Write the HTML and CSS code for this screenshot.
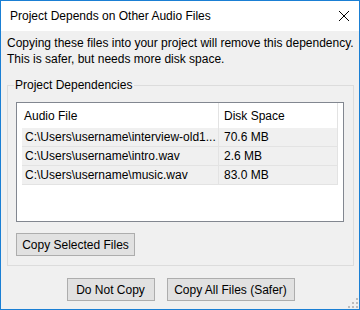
FILE: index.html
```html
<!DOCTYPE html>
<html lang="en">
<head>
    <meta charset="UTF-8">
    <meta name="viewport" content="width=device-width, initial-scale=1.0">
    <title>Project Depends on Other Audio Files</title>
    <link rel="stylesheet" href="styles.css">
</head>
<body>
    <div class="window">
        <div class="titlebar">
            <span class="title">Project Depends on Other Audio Files</span>
            <svg class="close" width="10" height="10" viewBox="0 0 10 10">
                <path d="M0 0L10 10M10 0L0 10" stroke="#000" stroke-width="1" fill="none"/>
            </svg>
        </div>

        <div class="content">
            <p class="message">Copying these files into your project will remove this dependency. This is safer, but needs more disk space.</p>

            <fieldset class="group">
                <legend>Project Dependencies</legend>

                <div class="listview">
                    <div class="list-header">
                        <div class="col col-file">Audio File</div>
                        <div class="col col-size">Disk Space</div>
                    </div>
                    <div class="list-row">
                        <div class="col col-file">C:\Users\username\interview-old1...</div>
                        <div class="col col-size">70.6 MB</div>
                    </div>
                    <div class="list-row">
                        <div class="col col-file">C:\Users\username\intro.wav</div>
                        <div class="col col-size">2.6 MB</div>
                    </div>
                    <div class="list-row">
                        <div class="col col-file">C:\Users\username\music.wav</div>
                        <div class="col col-size">83.0 MB</div>
                    </div>
                </div>

                <button class="btn btn-selected">Copy Selected Files</button>
            </fieldset>

            <div class="dialog-buttons">
                <button class="btn btn-nocopy">Do Not Copy</button>
                <button class="btn btn-copyall">Copy All Files (Safer)</button>
            </div>
        </div>

        <!-- уголок для изменения размера -->
        <svg class="grip" width="10" height="10" viewBox="0 0 10 10">
            <rect x="8" y="0" width="2" height="2" fill="#bcbcbc"/>
            <rect x="4" y="4" width="2" height="2" fill="#bcbcbc"/>
            <rect x="8" y="4" width="2" height="2" fill="#bcbcbc"/>
            <rect x="0" y="8" width="2" height="2" fill="#bcbcbc"/>
            <rect x="4" y="8" width="2" height="2" fill="#bcbcbc"/>
            <rect x="8" y="8" width="2" height="2" fill="#bcbcbc"/>
        </svg>
    </div>
</body>
</html>
```

FILE: styles.css
```css
:root {
    --accent: #1a7fd4;
    --face: #f0f0f0;
    --text: #000;
    --group-line: #dcdcdc;
    --list-border: #828790;
    --grid-line: #e3e3e3;
}

* {
    margin: 0;
    padding: 0;
    box-sizing: border-box;
}

body {
    font-family: "Liberation Sans", Arial, sans-serif;
    font-size: 12px;
    color: var(--text);
    background-color: var(--face);
}

.window {
    position: relative;
    width: 360px;
    height: 310px;
    border: 1px solid var(--accent);
    background-color: var(--face);
    display: flex;
    flex-direction: column;
}

.titlebar {
    height: 30px;
    background-color: white;
    display: flex;
    align-items: center;
    justify-content: space-between;
    padding: 0 10px 0 9px;
    flex-shrink: 0;
}

.title {
    line-height: 16px;
}

.content {
    flex: 1;
    display: flex;
    flex-direction: column;
    padding: 4px 5px 0 6px;
}

.message {
    line-height: 16px;
    margin-right: -4px;
    margin-bottom: 10px;
}

.group {
    border: 1px solid var(--group-line);
    padding: 9px 9px 9px 8px;
    display: flex;
    flex-direction: column;
    align-items: flex-start;
}

.group legend {
    margin-left: -2px;
    padding: 0 2px 0 1px;
    line-height: 16px;
}

.listview {
    width: 100%;
    height: 120px;
    border: 1px solid var(--list-border);
    background-color: white;
    padding: 0 5px 0 5px;
    overflow: hidden;
}

.list-header,
.list-row {
    display: flex;
}

.list-header {
    height: 25px;
    align-items: center;
}

.list-row {
    height: 19px;
    align-items: center;
    background-color: var(--face);
    border-bottom: 1px solid var(--grid-line);
}

.col {
    height: 100%;
    display: flex;
    align-items: center;
    white-space: nowrap;
    overflow: hidden;
    border-right: 1px solid var(--grid-line);
}

.col-file {
    width: 197px;
    padding-left: 3px;
}

.list-header .col-file {
    padding-left: 2px;
}

.col-size {
    width: 119px;
    padding-left: 5px;
}

.btn {
    font-family: inherit;
    font-size: 12px;
    color: var(--text);
    background-color: #e1e1e1;
    border: 1px solid #adadad;
    height: 23px;
    padding: 0;
    white-space: nowrap;
}

.btn-selected {
    width: 119px;
    margin-top: 11px;
}

.dialog-buttons {
    display: flex;
    justify-content: center;
    gap: 12px;
    margin-top: 12px;
}

.btn-nocopy {
    width: 88px;
}

.btn-copyall {
    width: 128px;
}

.grip {
    position: absolute;
    right: 1px;
    bottom: 1px;
}
```
